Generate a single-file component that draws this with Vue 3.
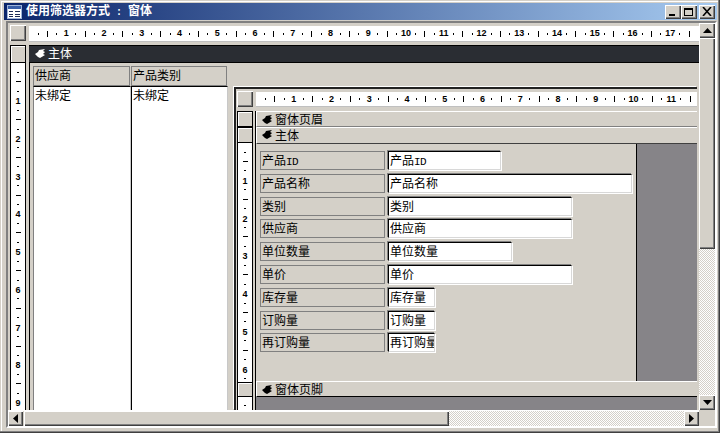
<script setup>
function marks(count) {
  const out = []
  for (let i = 0; i < count; i++) {
    const m = i % 4
    if (m === 0) out.push({ k: 'dot', t: '' })
    else if (m === 1) out.push({ k: 'tick', t: '' })
    else if (m === 2) out.push({ k: 'dot', t: '' })
    else out.push({ k: 'num', t: String((i + 1) / 4) })
  }
  return out
}
const outerH = marks(70)
const innerH = marks(46)
const outerV = marks(36)
const innerV = marks(25)
const tailV = [{ k: 'dot', t: '' }]

const rows = [
  { label: '产品', lat: 'ID', w: 113 },
  { label: '产品名称', w: 244 },
  { label: '类别', w: 184 },
  { label: '供应商', w: 184 },
  { label: '单位数量', w: 124 },
  { label: '单价', w: 184 },
  { label: '库存量', w: 47 },
  { label: '订购量', w: 47 },
  { label: '再订购量', w: 47 }
]
</script>

<template>
  <div class="win">
    <header class="title">
      <svg class="appicon" width="15" height="14" viewBox="0 0 15 14">
        <rect x="0.5" y="0.5" width="14" height="13" fill="#fff" stroke="#9fb4d8" />
        <rect x="1" y="1" width="13" height="3" fill="#3a5fa8" />
        <path d="M2 6h4v1H2zM8 6h5v1H8zM2 9h4v1H2zM8 9h5v1H8zM2 11h4v1H2zM8 11h5v1H8z" fill="#1c2c58" />
      </svg>
      <span class="title-text">使用筛选器方式<span class="lat sep"> : </span>窗体</span>
      <span class="btn tb tb-min"><i></i></span>
      <span class="btn tb tb-max"><i></i></span>
      <span class="btn tb tb-close">
        <svg width="10" height="9" viewBox="0 0 10 9"><path d="M1 0l8 9M9 0l-8 9" stroke="#000" stroke-width="1.6" fill="none" /></svg>
      </span>
    </header>

    <div class="client">
      <main class="design">
        <div class="corner btn"></div>
        <div class="hruler">
          <span v-for="(m, i) in outerH" :key="i" class="hm"><b :class="m.k">{{ m.t }}</b></span>
        </div>

        <aside class="vcol">
          <div class="vhead"><span class="flatbox"></span></div>
          <div class="vruler">
            <span v-for="(m, i) in outerV" :key="i" class="vm"><b :class="m.k">{{ m.t }}</b></span>
          </div>
        </aside>

        <section class="form">
          <div class="band">
            <svg class="hand" width="10" height="9" viewBox="0 0 10 9"><polygon points="0,5 3,3 4,1 10,0 8,2 10,3 8,5 10,6 5,9 3,8" fill="#fff" /></svg>
            <span>主体</span>
          </div>
          <div class="body">
            <div class="col">
              <div class="col-head">供应商</div>
              <div class="col-box">未绑定</div>
            </div>
            <div class="col col2">
              <div class="col-head">产品类别</div>
              <div class="col-box">未绑定</div>
            </div>

            <div class="sub">
              <div class="corner btn"></div>
              <div class="hruler sub-ruler">
                <span v-for="(m, i) in innerH" :key="i" class="hm"><b :class="m.k">{{ m.t }}</b></span>
              </div>

              <aside class="sub-v">
                <span class="flatbox sbox"></span>
                <span class="flatbox sbox"></span>
                <div class="vruler sub-vr">
                  <span v-for="(m, i) in innerV" :key="i" class="vm"><b :class="m.k">{{ m.t }}</b></span>
                </div>
                <span class="flatbox sbox sbox3"></span>
                <div class="vruler sub-tail">
                  <span v-for="(m, i) in tailV" :key="i" class="vm"><b :class="m.k">{{ m.t }}</b></span>
                </div>
              </aside>

              <div class="sub-form">
                <div class="bar bar1">
                  <svg class="hand" width="10" height="9" viewBox="0 0 10 9"><polygon points="0,5 3,3 4,1 10,0 8,2 10,3 8,5 10,6 5,9 3,8" fill="#000" /></svg>
                  <span>窗体页眉</span>
                </div>
                <div class="bar bar2">
                  <svg class="hand" width="10" height="9" viewBox="0 0 10 9"><polygon points="0,5 3,3 4,1 10,0 8,2 10,3 8,5 10,6 5,9 3,8" fill="#000" /></svg>
                  <span>主体</span>
                </div>
                <div class="canvas">
                  <div class="detail">
                    <div v-for="r in rows" :key="r.label" class="row">
                      <div class="lbl">{{ r.label }}<span v-if="r.lat" class="lat">{{ r.lat }}</span></div>
                      <div class="txt" :style="{ width: r.w + 'px' }">{{ r.label }}<span v-if="r.lat" class="lat">{{ r.lat }}</span></div>
                    </div>
                  </div>
                  <div class="void"></div>
                </div>
                <div class="bar bar3">
                  <svg class="hand" width="10" height="9" viewBox="0 0 10 9"><polygon points="0,5 3,3 4,1 10,0 8,2 10,3 8,5 10,6 5,9 3,8" fill="#000" /></svg>
                  <span>窗体页脚</span>
                </div>
                <div class="foot-void"></div>
              </div>
            </div>
          </div>
        </section>
      </main>

      <div class="vscroll">
        <span class="btn sb">
          <svg width="9" height="5" viewBox="0 0 9 5"><polygon points="4.5,0 9,5 0,5" fill="#000" /></svg>
        </span>
        <span class="btn vthumb"></span>
        <span class="track"></span>
        <span class="btn sb">
          <svg width="9" height="5" viewBox="0 0 9 5"><polygon points="0,0 9,0 4.5,5" fill="#000" /></svg>
        </span>
      </div>

      <div class="hscroll">
        <span class="btn sbh">
          <svg width="5" height="9" viewBox="0 0 5 9"><polygon points="5,0 5,9 0,4.5" fill="#000" /></svg>
        </span>
        <span class="btn hthumb"></span>
        <span class="track"></span>
        <span class="btn sbh">
          <svg width="5" height="9" viewBox="0 0 5 9"><polygon points="0,0 5,4.5 0,9" fill="#000" /></svg>
        </span>
      </div>
      <div class="sizer"></div>
    </div>
  </div>
</template>

<style scoped>
.win {
  width: 720px;
  height: 433px;
  box-sizing: border-box;
  padding: 3px 3px 5px 4px;
  display: flex;
  flex-direction: column;
  background: #d4d0c8;
  box-shadow: inset -1px -1px 0 #404040, inset -2px -2px 0 #808080, inset 1px 1px 0 #d4d0c8, inset 2px 2px 0 #fff;
  font: 12px/16px "Noto Sans CJK SC", sans-serif;
  color: #000;
  overflow: hidden;
}
.lat {
  font-family: "Liberation Mono", monospace;
  font-size: 11px;
  letter-spacing: -0.6px;
}
.btn {
  display: flex;
  align-items: center;
  justify-content: center;
  box-sizing: border-box;
  background: #d4d0c8;
  box-shadow: inset 1px 1px 0 #fff, inset -1px -1px 0 #404040, inset -2px -2px 0 #808080;
  flex: none;
}
.flatbox {
  display: block;
  box-sizing: border-box;
  width: 100%;
  height: 100%;
  background: #d4d0c8;
  box-shadow: inset 1px 1px 0 #fff;
}

.title {
  height: 17px;
  flex: none;
  display: flex;
  align-items: center;
  padding-left: 3px;
  padding-right: 2px;
  background: linear-gradient(90deg, #0a246a, #a6caf0);
}
.appicon { flex: none; }
.title-text {
  margin-left: 4px;
  margin-right: auto;
  color: #fff;
  font-weight: 700;
  white-space: pre;
}
.sep { font-size: 10px; letter-spacing: 0; }
.tb { width: 16px; height: 14px; position: relative; }
.tb-close { margin-left: 2px; }
.tb-min i { width: 6px; height: 2px; background: #000; margin: 7px 3px 0 0; }
.tb-max i { width: 9px; height: 8px; box-sizing: border-box; border: 1px solid #000; border-top-width: 2px; margin-right: 1px; }

.client {
  margin: 1px 0 0 2px;
  flex: 1;
  min-height: 0;
  display: grid;
  grid-template-columns: 691px 16px;
  grid-template-rows: 387px 16px;
  border-top: 2px solid #808080;
  border-left: 2px solid #808080;
  border-bottom: 2px solid #fff;
  border-right: 2px solid #fff;
  box-sizing: border-box;
}

.design {
  box-sizing: border-box;
  padding: 2px 0 0 2px;
  display: grid;
  grid-template-columns: 19px 1fr;
  grid-template-rows: 19px 1fr;
  overflow: hidden;
  min-height: 0;
}
.corner { width: 16px; height: 16px; }

.hruler {
  height: 16px;
  margin-top: 1px;
  box-sizing: border-box;
  background: #fff;
  border-bottom: 1px solid #c0c0c0;
  display: flex;
  padding-left: 4.3px;
  overflow: hidden;
}
.hm {
  width: 9.45px;
  flex: none;
  display: flex;
  align-items: center;
  justify-content: center;
  overflow: visible;
}
.vm {
  height: 9.45px;
  flex: none;
  display: flex;
  align-items: center;
  justify-content: center;
  overflow: visible;
}
b { display: block; flex: none; }
.dot { background: #000; }
.tick { background: #000; }
.num {
  font: 700 9px/9px "Liberation Sans", sans-serif;
  color: #000;
}
.hm .dot { width: 1px; height: 2px; }
.hm .tick { width: 1px; height: 6px; }
.vm .dot { width: 2px; height: 1px; }
.vm .tick { width: 5px; height: 1px; }
.vm .num { position: relative; top: 1px; }

.vcol {
  width: 16px;
  display: flex;
  flex-direction: column;
  min-height: 0;
  margin-top: 1px;
}
.vhead {
  height: 18px;
  flex: none;
  box-sizing: border-box;
  border: 1px solid #000;
}
.vruler {
  flex: 1;
  min-height: 0;
  box-sizing: border-box;
  background: #fff;
  border-left: 1px solid #000;
  border-right: 1px solid #000;
  display: flex;
  flex-direction: column;
  padding-top: 4.7px;
  overflow: hidden;
}

.form {
  display: flex;
  flex-direction: column;
  min-height: 0;
  min-width: 0;
}
.band {
  height: 18px;
  margin-top: 1px;
  flex: none;
  box-sizing: border-box;
  background: #2a2d33;
  border-top: 1px solid #000;
  border-bottom: 1px solid #000;
  display: flex;
  align-items: center;
  gap: 3px;
  padding: 0 0 2px 6px;
  color: #fff;
}
.hand { flex: none; }
.body {
  flex: 1;
  min-height: 0;
  box-sizing: border-box;
  display: flex;
  border-left: 1px solid #000;
  padding: 3px 2px 0 3px;
  overflow: hidden;
}
.col {
  width: 98px;
  flex: none;
  display: flex;
  flex-direction: column;
}
.col2 { width: 97px; }
.col-head {
  height: 20px;
  flex: none;
  box-sizing: border-box;
  margin-right: 1px;
  border: 1px solid #808080;
  padding-left: 1px;
  line-height: 15px;
}
.col-box {
  flex: 1;
  box-sizing: border-box;
  background: #fff;
  border-top: 1px solid #000;
  border-left: 1px solid #808080;
  border-right: 1px solid #c8c8c8;
  padding-left: 1px;
  line-height: 15px;
}
.col2 .col-box { border-left-color: #000; }

.sub {
  flex: 1;
  min-width: 0;
  margin: 21px 0 0 6px;
  box-sizing: border-box;
  border-top: 2px solid #222;
  border-left: 2px solid #222;
  box-shadow: -1px -1px 0 #fff;
  padding: 2px 0 0 1px;
  display: grid;
  grid-template-columns: 19px 1fr;
  grid-template-rows: 20px 1fr;
  overflow: hidden;
}
.sub-ruler { height: 15px; margin-top: 1px; padding-left: 4.7px; }
.sub-v {
  width: 16px;
  display: flex;
  flex-direction: column;
  min-height: 0;
}
.sbox {
  height: 16px;
  border: 1px solid #000;
  flex: none;
}
.sub-vr { flex: none; height: 239px; padding-top: 4.3px; }
.sbox3 { height: 15px; }
.sub-tail { flex: 1; padding-top: 4px; }

.sub-form {
  display: flex;
  flex-direction: column;
  min-height: 0;
  min-width: 0;
  border-left: 1px solid #000;
  margin-left: -1px;
}
.bar {
  flex: none;
  height: 16px;
  box-sizing: border-box;
  display: flex;
  align-items: center;
  gap: 3px;
  padding-left: 5px;
  background: #d4d0c8;
  border-top: 1px solid #fff;
  border-left: 1px solid #fff;
}
.bar1 { border-bottom: 1px solid #808080; }
.bar2 { border-bottom: 1px solid #404040; height: 17px; padding-bottom: 2px; }
.bar3 { border-bottom: 1px solid #000; height: 16px; }
.canvas {
  height: 237px;
  flex: none;
  display: flex;
  min-width: 0;
}
.detail {
  width: 381px;
  flex: none;
  box-sizing: border-box;
  padding: 7px 0 0 4px;
  display: flex;
  flex-direction: column;
  gap: 3.8px;
  border-right: 1px solid #000;
}
.row {
  height: 19px;
  flex: none;
  display: flex;
  gap: 3px;
}
.lbl {
  width: 125px;
  flex: none;
  box-sizing: border-box;
  border: 1px solid #808080;
  padding-left: 1px;
  line-height: 15px;
  white-space: nowrap;
  overflow: hidden;
}
.txt {
  flex: none;
  box-sizing: border-box;
  background: #fff;
  border-top: 1px solid #000;
  border-left: 1px solid #000;
  border-right: 1px solid #d8d8d8;
  border-bottom: 1px solid #d8d8d8;
  box-shadow: -1px -1px 0 #808080, 1px 1px 0 #fff;
  padding-left: 1px;
  line-height: 15px;
  white-space: nowrap;
  overflow: hidden;
}
.void {
  flex: 1;
  background: #868488;
}
.foot-void {
  flex: 1;
  background: #868488;
}

.vscroll {
  display: flex;
  flex-direction: column;
  width: 16px;
  min-height: 0;
}
.sb { width: 16px; height: 15px; }
.vthumb { width: 16px; height: 211px; }
.track {
  flex: 1;
  background: repeating-conic-gradient(#fff 0 25%, #d4d0c8 0 50%) 0 0 / 2px 2px;
}
.hscroll {
  display: flex;
  height: 16px;
  border-top: 1px solid #fff;
  box-sizing: border-box;
}
.sbh { width: 15px; height: 15px; }
.hthumb { width: 425px; height: 15px; margin-left: 1px; }
.sizer { background: #d4d0c8; }
</style>
